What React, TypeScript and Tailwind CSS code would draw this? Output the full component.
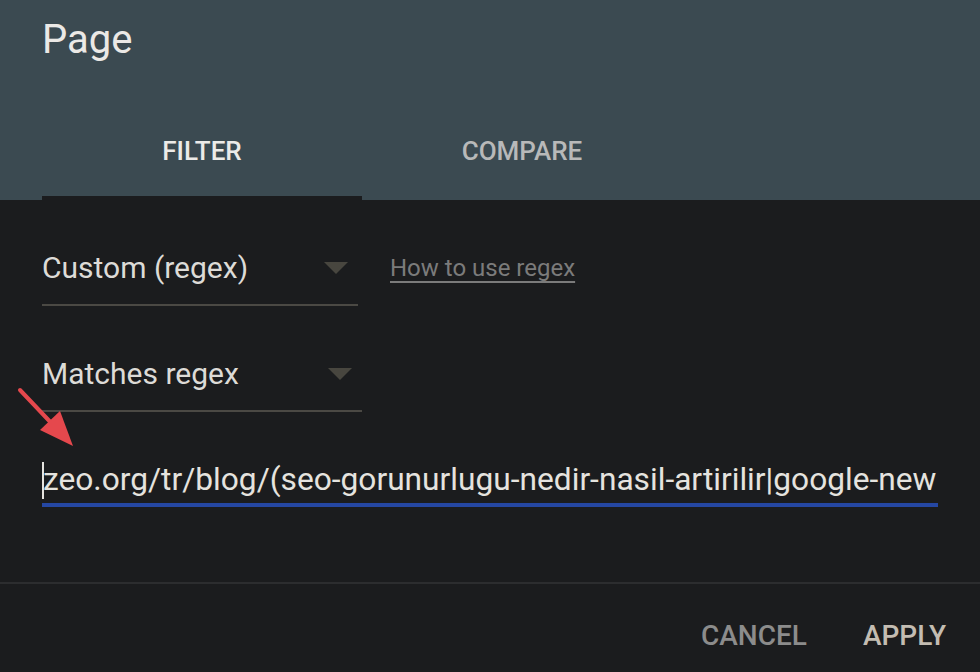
import React from 'react'

function Caret({ className }: { className?: string }) {
  return (
    <svg width="24" height="12" viewBox="0 0 24 12" className={className}>
      <path d="M0 0 L24 0 L12 12 Z" fill="#48463f" />
    </svg>
  )
}

function Select({ label, width }: { label: string; width: string }) {
  return (
    <div className={`flex items-center justify-between h-[64px] pb-[11px] border-b-2 border-[#4b4944] ${width}`}>
      <span className="text-[30px] text-[#dddbd7] leading-none">{label}</span>
      <Caret className="mr-[10px]" />
    </div>
  )
}

export default function App() {
  return (
    <div
      className="relative w-[980px] h-[672px] overflow-hidden bg-[#1b1c1e] flex flex-col"
      style={{ fontFamily: 'Roboto, "Liberation Sans", sans-serif' }}
    >
      {/* header */}
      <div className="h-[200px] shrink-0 bg-[#3b4a51] flex flex-col px-[42px]">
        <h1 className="pt-[16px] text-[40px] font-normal text-[#ebe9e6] leading-[48px]">Page</h1>
        <div className="mt-auto flex">
          <div className="w-[320px] h-[76px] flex flex-col">
            <div className="flex-1 flex items-center justify-center pb-[17px] text-[26px] font-medium text-[#ecebe8]">
              FILTER
            </div>
            <div className="h-[4px] bg-[#1b1c1e]" />
          </div>
          <div className="w-[320px] h-[76px] flex flex-col">
            <div className="flex-1 flex items-center justify-center pb-[17px] text-[26px] font-medium text-[#b8b9b9]">
              COMPARE
            </div>
            <div className="h-[4px]" />
          </div>
        </div>
      </div>

      {/* body */}
      <div className="flex-1 flex flex-col px-[42px]">
        <div className="mt-[42px] flex items-start">
          <Select label="Custom (regex)" width="w-[316px]" />
          <a className="ml-[32px] mt-[14px] text-[24px] leading-[24px] text-[#7b7b7b] underline underline-offset-[5px] cursor-pointer">
            How to use regex
          </a>
        </div>
        <div className="mt-[42px]">
          <Select label="Matches regex" width="w-[320px]" />
        </div>
        <div className="mt-[39px] w-[896px] h-[56px] pt-[6px] flex items-center border-b-4 border-[#2547a3] overflow-hidden">
          <span className="w-[2px] h-[37px] bg-[#e5e3df] shrink-0" />
          <span className="-ml-[1px] text-[31.7px] text-[#e5e3df] whitespace-nowrap leading-none">
            zeo.org/tr/blog/(seo-gorunurlugu-nedir-nasil-artirilir|google-new
          </span>
        </div>
      </div>

      {/* footer */}
      <div className="h-[90px] shrink-0 border-t-2 border-[#2c2d2f] flex items-center justify-end pt-[16px] pr-[34px] gap-[56px]">
        <button className="text-[28px] font-medium text-[#8c8c8c]">CANCEL</button>
        <button className="text-[28px] font-medium text-[#c3bcb2]">APPLY</button>
      </div>

      {/* annotation arrow */}
      <svg className="absolute left-0 top-[380px]" width="100" height="80" viewBox="0 0 100 80">
        <line x1="20" y1="10" x2="56" y2="48" stroke="#e5484d" strokeWidth="4" strokeLinecap="round" />
        <path d="M40 50 L60 31 L73 66 Z" fill="#e5484d" />
      </svg>
    </div>
  )
}
